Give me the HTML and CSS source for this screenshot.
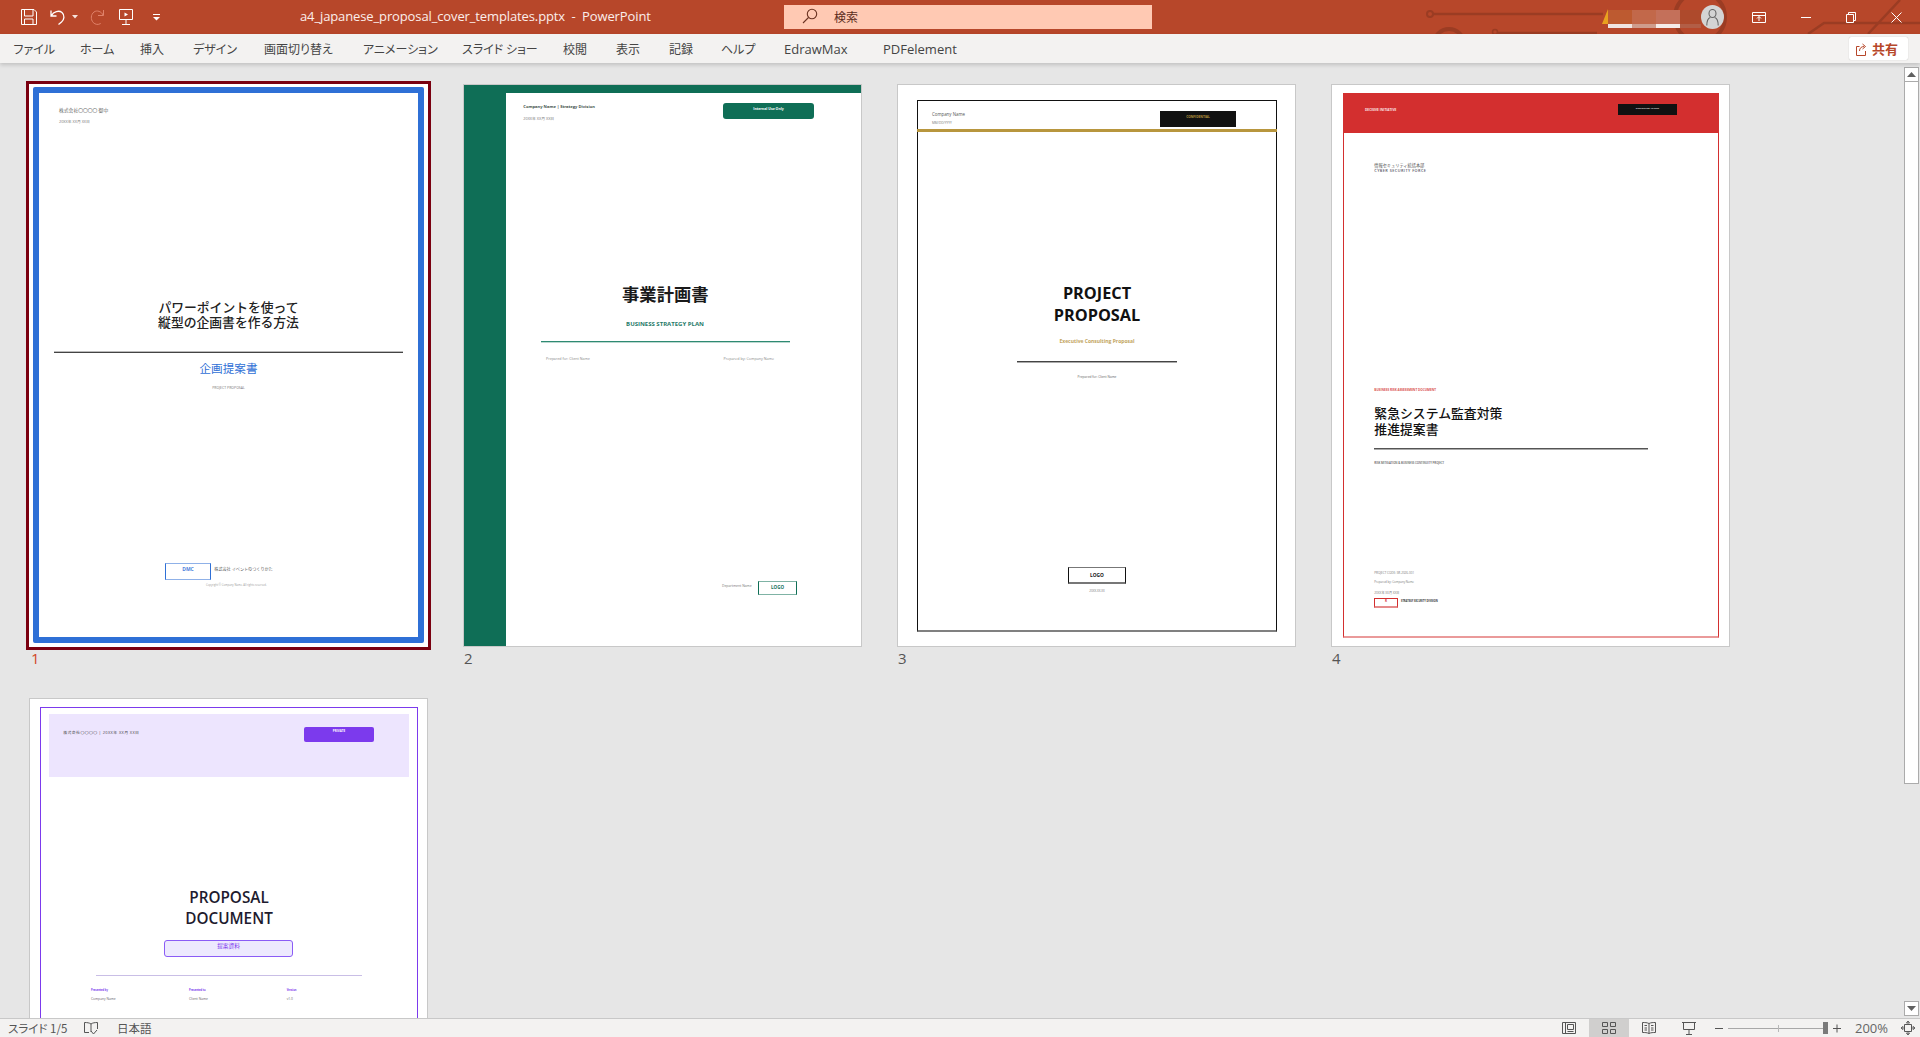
FILE: index.html
```html
<!DOCTYPE html>
<html lang="ja">
<head>
<meta charset="utf-8">
<title>a4_japanese_proposal_cover_templates.pptx - PowerPoint</title>
<link rel="stylesheet" href="styles.css">
</head>
<body>
<header class="titlebar">
  <svg class="circuit" width="500" height="34" viewBox="1420 0 500 34" fill="none">
    <path d="M1433 14H1603" stroke-width="2.500"/>
    <circle cx="1430" cy="14" r="3" stroke-width="2"/>
    <circle cx="1449" cy="44" r="15" stroke-width="4"/>
    <circle cx="1495" cy="32" r="2.500" stroke-width="1.500"/>
    <path d="M1498 33H1597" stroke-width="2.500"/>
    <circle cx="1700" cy="17" r="25" stroke-width="4"/>
    <path d="M1808 34L1824 23H1920M1868 34L1900 0" stroke-width="2.500"/>
  </svg>
  <div class="qat">
    <svg class="ico ico-save" width="16" height="16" viewBox="0 0 16 16" fill="none"><path d="M.5.500h12.500l2.500 2.500v12.500H.5zM3.500.5v6.500h8.500V.5M3.500 15.500V10h8.500v5.500"/></svg>
    <svg class="ico ico-undo" width="16" height="16" viewBox="0 0 16 16" fill="none"><path d="M1 1.500v5.500h5.500M1.500 6.500C3.500 2.500 9 1 12 3.500c3 2.700 2.300 7-.5 9.500L8.500 15.500" stroke-width="1.300"/></svg>
    <svg class="ico ico-caret" width="6" height="4" viewBox="0 0 6 4"><path d="M0 0h6L3 3.500z" fill="#f5e3dd" stroke="none"/></svg>
    <svg class="ico ico-redo" width="16" height="16" viewBox="0 0 16 16" fill="none"><path d="M13.500 1v5.500H8M13 6C11.500 2.500 7 .8 4 3c-3.300 2.500-3.500 7.500-.8 10.500 2 2.200 5 2.500 7.500 1"/></svg>
    <svg class="ico ico-present" width="14" height="16" viewBox="0 0 14 16" fill="none"><path d="M.5.500h13v10H.5zM7 10.500v5M3 15.500h8"/><path d="M5.500 3.500l3.500 2-3.500 2z" fill="#fff" stroke="none"/></svg>
    <svg class="ico ico-more" width="7" height="7" viewBox="0 0 7 7" fill="none"><path d="M0 .5h7"/><path d="M0 3h7L3.500 6.500z" fill="#fff" stroke="none"/></svg>
  </div>
  <div class="doc-title">a4_japanese_proposal_cover_templates.pptx &nbsp;-&nbsp; PowerPoint</div>
  <div class="search">
    <svg width="16" height="16" viewBox="0 0 16 16" fill="none" stroke="#6b3322" stroke-width="1.100"><circle cx="10" cy="6" r="4.700"/><path d="M6.500 9.500L1 15"/></svg>
    <span>検索</span>
  </div>
  <div class="account">
    <svg class="flame" width="6" height="15" viewBox="0 0 6 15"><path d="M6 0L0 15h6z" fill="#e9a11f"/></svg>
    <div class="mosaic">
      <i class="m1"></i><i class="m2"></i><i class="m3"></i><i class="m4"></i>
      <i class="m5"></i><i class="m6"></i><i class="m7"></i><i class="m8"></i>
    </div>
    <div class="avatar">
      <svg width="13" height="17" viewBox="0 0 13 17" fill="none" stroke="#666" stroke-width="1.100"><ellipse cx="6.500" cy="4.500" rx="3.500" ry="4"/><path d="M.8 16.500c0-5 2-7.500 3.500-8M12.200 16.500c0-5-2-7.500-3.500-8"/></svg>
    </div>
  </div>
  <div class="winctl">
    <svg width="14" height="11" viewBox="0 0 14 11" fill="none"><path d="M.5.500h13v10H.5zM.5 3.500h13"/><path d="M7 9V4.500M5 6.500l2-2 2 2"/></svg>
    <svg width="10" height="11" viewBox="0 0 10 11" fill="none"><path d="M0 5.500h10"/></svg>
    <svg width="10" height="11" viewBox="0 0 10 11" fill="none"><path d="M.5 2.500h7v8h-7zM2.500 2.500v-2h7v8h-2"/></svg>
    <svg width="11" height="11" viewBox="0 0 11 11" fill="none"><path d="M.5.500l10 10M10.500.500l-10 10"/></svg>
  </div>
</header>

<nav class="menubar">
  <span class="tab">ファイル</span><span class="tab">ホーム</span><span class="tab">挿入</span><span class="tab">デザイン</span><span class="tab">画面切り替え</span><span class="tab">アニメーション</span><span class="tab">スライド ショー</span><span class="tab">校閲</span><span class="tab">表示</span><span class="tab">記録</span><span class="tab">ヘルプ</span><span class="tab tab-latin">EdrawMax</span><span class="tab tab-latin">PDFelement</span>
  <button class="share">
    <svg width="11" height="14" viewBox="0 0 11 14" fill="none" stroke="#b7472a"><path d="M3.500 4.500H.5v9h9V9"/><path d="M3.500 9c0-3 2-4.500 4.500-4.500M6.500 2l3 2.500-3 2.500" /></svg>
    <span>共有</span>
  </button>
</nav>

<main class="workspace">
  <div class="sorter">
    <figure class="thumb">
      <section class="slide slide-selected">
        <div class="s1-frame"></div>
        <div class="t s1-co">株式会社〇〇〇〇 御中</div>
        <div class="t s1-date">20XX年 XX月 XX日</div>
        <h1 class="t s1-title">パワーポイントを使って<br>縦型の企画書を作る方法</h1>
        <div class="rule s1-rule"></div>
        <div class="t s1-sub">企画提案書</div>
        <div class="t s1-en">PROJECT PROPOSAL</div>
        <div class="s1-logo">DMC</div>
        <div class="t s1-corp">株式会社 イベントのつくりかた</div>
        <div class="t s1-copy">Copyright © Company Name. All rights reserved.</div>
      </section>
      <figcaption class="num num-selected">1</figcaption>
    </figure>

    <figure class="thumb">
      <section class="slide">
        <div class="s2-side"></div>
        <div class="s2-top"></div>
        <div class="t s2-co">Company Name | Strategy Division</div>
        <div class="t s2-date">20XX年 XX月 XX日</div>
        <div class="s2-pill">Internal Use Only</div>
        <h1 class="t s2-title">事業計画書</h1>
        <div class="t s2-sub">BUSINESS STRATEGY PLAN</div>
        <div class="rule s2-rule"></div>
        <div class="t s2-for">Prepared for: Client Name</div>
        <div class="t s2-by">Prepared by: Company Name</div>
        <div class="t s2-dept">Department Name</div>
        <div class="s2-logo">LOGO</div>
      </section>
      <figcaption class="num">2</figcaption>
    </figure>

    <figure class="thumb">
      <section class="slide">
        <div class="s3-frame"></div>
        <div class="s3-gold"></div>
        <div class="t s3-co">Company Name</div>
        <div class="t s3-date">MM/DD/YYYY</div>
        <div class="s3-conf">CONFIDENTIAL</div>
        <h1 class="t s3-title">PROJECT<br>PROPOSAL</h1>
        <div class="t s3-sub">Executive Consulting Proposal</div>
        <div class="rule s3-rule"></div>
        <div class="t s3-for">Prepared for: Client Name</div>
        <div class="s3-logo">LOGO</div>
        <div class="t s3-ver">20XX.XX.XX</div>
      </section>
      <figcaption class="num">3</figcaption>
    </figure>

    <figure class="thumb">
      <section class="slide">
        <div class="s4-frame"></div>
        <div class="s4-head"></div>
        <div class="t s4-tag">DECISIVE INITIATIVE</div>
        <div class="s4-black">RESTRICTED ACCESS</div>
        <div class="t s4-dept">情報セキュリティ統括本部</div>
        <div class="t s4-force">CYBER SECURITY FORCE</div>
        <div class="t s4-kicker">BUSINESS RISK ASSESSMENT DOCUMENT</div>
        <h1 class="t s4-title">緊急システム監査対策<br>推進提案書</h1>
        <div class="rule s4-rule"></div>
        <div class="t s4-risk">RISK MITIGATION &amp; BUSINESS CONTINUITY PROJECT</div>
        <div class="t s4-code">PROJECT CODE: SR-2026-001</div>
        <div class="t s4-by">Prepared by: Company Name</div>
        <div class="t s4-date">20XX年 XX月 XX日</div>
        <div class="s4-logo">R</div>
        <div class="t s4-div">STRATEGY SECURITY DIVISION</div>
      </section>
      <figcaption class="num">4</figcaption>
    </figure>

    <figure class="thumb">
      <section class="slide">
        <div class="s5-frame"></div>
        <div class="s5-head"></div>
        <div class="t s5-co">株式会社〇〇〇〇 | 20XX年 XX月 XX日</div>
        <div class="s5-pill">PRIVATE</div>
        <h1 class="t s5-title">PROPOSAL<br>DOCUMENT</h1>
        <div class="s5-tag">提案資料</div>
        <div class="rule s5-rule"></div>
        <div class="s5-meta">
          <div><b>Presented by</b><span>Company Name</span></div>
          <div><b>Presented to</b><span>Client Name</span></div>
          <div><b>Version</b><span>v1.0</span></div>
        </div>
      </section>
    </figure>
  </div>

  <aside class="scrollbar">
    <div class="sb-btn"><svg width="9" height="5" viewBox="0 0 9 5"><path d="M4.500 0L9 5H0z" fill="#606060"/></svg></div>
    <div class="sb-thumb"></div>
    <div class="sb-track"></div>
    <div class="sb-btn"><svg width="9" height="5" viewBox="0 0 9 5"><path d="M0 0h9L4.500 5z" fill="#606060"/></svg></div>
  </aside>
</main>

<footer class="statusbar">
  <span class="st-slide">スライド 1/5</span>
  <svg class="st-book" width="14" height="13" viewBox="0 0 14 13" fill="none" stroke="#555"><path d="M7 2C5.500 .8 3 .5.500.500v10H5M7 2c1.500-1.200 4-1.500 6.500-1.500V7M7 2v8"/><path d="M7 9l2.500 3L13 8"/></svg>
  <span class="st-lang">日本語</span>
  <div class="st-right">
    <span class="view"><svg width="14" height="12" viewBox="0 0 14 12" fill="none" stroke="#555"><path d="M.5.500h13v11H.5zM3.500.500v11M5.500 2.500h6v5h-6zM5.500 9.500h6"/></svg></span>
    <span class="view view-on"><svg width="14" height="12" viewBox="0 0 14 12" fill="none" stroke="#555"><path d="M.5.500h5v4h-5zM8.500.500h5v4h-5zM.5 7.500h5v4h-5zM8.500 7.500h5v4h-5z"/></svg></span>
    <span class="view"><svg width="14" height="12" viewBox="0 0 14 12" fill="none" stroke="#555"><path d="M7 1.500C5 .5 3 .5.500.500v10c2.500 0 4.500 0 6.500 1 2-1 4-1 6.500-1V.500C11 .5 9 .5 7 1.500zM7 1.500v10M2.500 3.500h2.500M2.500 6h2.500M2.500 8h2.500M9 3.500h2.500M9 6h2.500M9 8h2.500"/></svg></span>
    <span class="view"><svg width="14" height="13" viewBox="0 0 14 13" fill="none" stroke="#555"><path d="M0 .5h14M1.500.500v7h11v-7M7 7.500v5M4 12.500h6"/></svg></span>
    <div class="zoom">
      <svg width="8" height="9" viewBox="0 0 8 9" fill="none" stroke="#555"><path d="M0 4.500h8"/></svg>
      <div class="slider"><i class="tick"></i><i class="knob"></i></div>
      <svg class="zoom-plus" width="8" height="9" viewBox="0 0 8 9" fill="none" stroke="#555"><path d="M0 4.500h8M4 .5v8"/></svg>
    </div>
    <span class="pct">200%</span>
    <svg class="st-fit" width="16" height="16" viewBox="0 0 16 16" fill="none" stroke="#555"><path d="M4.500 4.500h7v7h-7zM8 3l-1.500 0L8 1l1.500 2zM8 13l-1.500 0L8 15l1.500-2zM3 8V6.500L1 8l2 1.500zM13 8V6.500L15 8l-2 1.500z"/></svg>
  </div>
</footer>
</body>
</html>
```
FILE: styles.css
```css
* { box-sizing: border-box; }
html, body { margin: 0; height: 100%; overflow: hidden; }
body {
  display: flex;
  flex-direction: column;
  height: 1037px;
  font-family: "Open Sans", "Noto Sans CJK JP", sans-serif;
  background: #e6e6e6;
  color: #444;
}

/* Title bar */
.titlebar {
  position: relative;
  flex: 0 0 34px;
  display: flex;
  align-items: center;
  background: #b7472a;
  color: #fff;
  overflow: hidden;
}
.circuit { position: absolute; right: 0; top: 0; stroke: #9b3c23; }
.qat { position: relative; display: flex; align-items: center; padding-left: 21px; width: 300px; flex: none; }
.ico { stroke: #fff; stroke-width: 1; flex: none; }
.ico-undo { margin-left: 13px; }
.ico-caret { margin-left: 6px; }
.ico-redo { margin-left: 12px; stroke: #e0826a; }
.ico-present { margin-left: 13px; }
.ico-more { margin-left: 20px; }
.doc-title {
  position: relative;
  width: 484px;
  flex: none;
  padding-bottom: 2px;
  font-size: 13px;
  letter-spacing: -0.12px;
  color: #fbeeea;
  white-space: nowrap;
}
.search {
  position: relative;
  flex: none;
  width: 368px;
  height: 24px;
  display: flex;
  align-items: center;
  gap: 16px;
  padding: 0 0 2px 18px;
  background: #ffc9b3;
  color: #5c2b1b;
  font-size: 12px;
  font-family: "Noto Sans CJK JP", sans-serif;
}
.account { position: relative; flex: none; margin-left: 450px; display: flex; align-items: center; }
.flame { margin-top: -2px; }
.mosaic { width: 93px; height: 18px; display: grid; grid-template-columns: 24px 24px 24px 21px; grid-template-rows: 14px 4px; margin-top: 4px; }
.m1 { background: #bd5a30; } .m2 { background: #c2684a; } .m3 { background: #c4705a; } .m4 { background: #ae4a2c; }
.m5 { background: #f0e4e0; } .m6 { background: #cf9c8c; } .m7 { background: #f5ecea; } .m8 { background: #b25e46; }
.avatar { width: 23px; height: 24px; border-radius: 50%; background: #d4d4d4; display: flex; align-items: center; justify-content: center; }
.winctl { position: relative; flex: none; margin-left: 28px; display: flex; align-items: center; gap: 35px; }
.winctl svg { stroke: #fff; stroke-width: 1; flex: none; }

/* Menu */
.menubar {
  position: relative;
  z-index: 2;
  flex: 0 0 29px;
  display: grid;
  grid-template-columns: 66.500px 60px 53px 71px 99px 99px 101px 53px 53px 52px 63px 99px auto;
  justify-content: start;
  align-items: center;
  padding-left: 13.500px;
  background: #f3f2f1;
  box-shadow: 0 2px 4px rgba(0, 0, 0, .16);
  font-family: "Noto Sans CJK JP", sans-serif;
  font-size: 12px;
  font-feature-settings: "palt";
  color: #444;
  white-space: nowrap;
}
.tab-latin { font-family: "Open Sans", sans-serif; font-size: 13px; }
.share {
  position: absolute;
  right: 12px;
  top: 3px;
  width: 59px;
  height: 23px;
  display: flex;
  align-items: center;
  gap: 5px;
  padding: 0 0 0 7px;
  border: 0;
  border-radius: 2px;
  background: #fff;
  box-shadow: 0 0 1px rgba(0, 0, 0, .3);
  color: #b7472a;
  font: 700 13px "Noto Sans CJK JP", sans-serif;
}

/* Workspace */
.workspace { flex: 1; min-height: 0; display: flex; overflow: hidden; background: #e6e6e6; }
.sorter {
  flex: 1;
  display: grid;
  grid-template-columns: repeat(4, 399px);
  grid-auto-rows: 614px;
  column-gap: 35px;
  align-content: start;
  padding: 21px 0 0 29px;
}
.thumb { margin: 0; }
.slide {
  position: relative;
  width: 399px;
  height: 563px;
  background: #fff;
  border: 1px solid #c8c8c8;
  overflow: hidden;
}
.slide-selected { border-color: #fff; outline: 3px solid #7a0010; }
.num { height: 51px; padding: 3px 0 0 1px; font-size: 15px; line-height: 16px; color: #555; }
.num-selected { color: #d24726; padding-left: 2px; }

.t { position: absolute; margin: 0; line-height: 1; white-space: nowrap; font-weight: 400; }
.rule { position: absolute; height: 1px; }

/* Slide 1 */
.s1-frame { position: absolute; left: 3px; top: 2px; width: 391px; height: 556px; border: 6px solid #2f70d6; border-radius: 2px; }
.s1-co { left: 29px; top: 22.500px; font-size: 4.800px; color: #666; }
.s1-date { left: 29px; top: 34.500px; font-size: 3.800px; color: #777; }
.s1-title { left: 0; width: 397px; top: 215px; text-align: center; font-size: 12.800px; line-height: 15.400px; font-weight: 500; color: #222; }
.s1-rule { left: 24px; top: 267px; width: 349px; background: #444; box-shadow: 0 -1px 0 #bbb; }
.s1-sub { left: 0; width: 397px; top: 276.700px; text-align: center; font-size: 11.600px; line-height: 14px; color: #2f70d6; }
.s1-en { left: 0; width: 397px; top: 301px; text-align: center; font-size: 3.500px; line-height: 4px; color: #777; }
.s1-logo {
  position: absolute; left: 135px; top: 478px; width: 46px; height: 17px;
  border: 1px solid #2f70d6; border-top-color: #8fb1e8; border-bottom-color: #8fb1e8;
  padding-top: 2px; text-align: center; font-size: 5px; line-height: 6px; font-weight: 700; color: #4f83dc;
}
.s1-corp { left: 184.300px; top: 482.500px; font-size: 4.100px; color: #555; }
.s1-copy { left: 176px; top: 498.600px; font-size: 2.700px; color: #999; }

/* Slide 2 */
.s2-side { position: absolute; left: -1px; top: -1px; width: 43px; height: 563px; background: #0f6e56; }
.s2-top { position: absolute; left: -1px; top: -1px; width: 399px; height: 9px; background: #0f6e56; }
.s2-co { left: 59.300px; top: 20.100px; font-size: 4.100px; font-weight: 700; color: #3f524c; }
.s2-date { left: 59.300px; top: 31.900px; font-size: 3.800px; color: #777; }
.s2-pill { position: absolute; left: 259px; top: 18px; width: 91px; height: 16px; border-radius: 3px; background: #0f6e56; padding-top: 4px; text-align: center; font-size: 3.500px; line-height: 4px; font-weight: 700; color: #fff; }
.s2-title { left: 101px; width: 200.600px; top: 199px; text-align: center; font-size: 17.300px; line-height: 22px; font-weight: 700; color: #1a1a1a; }
.s2-sub { left: 101px; width: 200px; top: 234.700px; text-align: center; font-size: 6px; line-height: 8px; font-weight: 700; color: #1f7a68; }
.s2-rule { left: 77px; top: 256px; width: 249px; background: #2e8a72; box-shadow: 0 1px 0 #bcd9d1; }
.s2-for { left: 82px; top: 271.900px; font-size: 3.600px; color: #888; }
.s2-by { left: 259.500px; top: 271.900px; font-size: 3.700px; color: #888; }
.s2-dept { left: 258px; top: 499px; font-size: 3.400px; color: #777; }
.s2-logo {
  position: absolute; left: 294px; top: 496px; width: 39px; height: 14px;
  border: 1px solid #0f6e56; border-top-color: #7fb3a5; border-bottom-color: #7fb3a5;
  text-align: center; font-size: 4.500px; line-height: 11px; font-weight: 700; color: #0f6e56;
}

/* Slide 3 */
.s3-frame { position: absolute; left: 19px; top: 15px; width: 360px; height: 532px; border: 1px solid #111; border-bottom: 2px solid #808080; }
.s3-gold { position: absolute; left: 19px; top: 44px; width: 360px; height: 3px; background: #b8963e; }
.s3-co { left: 34px; top: 27.200px; font-size: 4.400px; color: #555; }
.s3-date { left: 34px; top: 36.700px; font-size: 3.200px; color: #777; }
.s3-conf { position: absolute; left: 262px; top: 26px; width: 76px; height: 16px; background: #111; text-align: center; font-size: 3.200px; line-height: 13px; font-weight: 700; color: #b8963e; }
.s3-title { left: 99px; width: 200px; top: 198px; text-align: center; font-size: 16.300px; line-height: 21.700px; font-weight: 700; color: #111; }
.s3-sub { left: 99px; width: 200px; top: 252px; text-align: center; font-size: 5px; line-height: 8px; font-weight: 700; color: #c2a45e; }
.s3-rule { left: 119px; top: 276px; width: 160px; background: #444; box-shadow: 0 1px 0 #aaa; }
.s3-for { left: 99px; width: 200px; top: 291px; text-align: center; font-size: 3.200px; color: #666; }
.s3-logo {
  position: absolute; left: 170px; top: 482px; width: 58px; height: 17px;
  border: 1px solid #111; border-top-color: #777; border-bottom: 2px solid #777;
  text-align: center; font-size: 4.800px; line-height: 15px; font-weight: 700; color: #111;
}
.s3-ver { left: 99px; width: 200px; top: 504.500px; text-align: center; font-size: 3px; color: #777; }

/* Slide 4 */
.s4-frame { position: absolute; left: 11px; top: 8px; width: 376px; height: 545px; border: 1px solid #d32f2f; border-bottom: 2px solid #ea9a9a; }
.s4-head { position: absolute; left: 11px; top: 8px; width: 376px; height: 40px; background: #d32f2f; }
.s4-tag { left: 33px; top: 23.700px; font-size: 3.200px; font-weight: 700; color: #fbe4e4; }
.s4-black { position: absolute; left: 286px; top: 19px; width: 59px; height: 11px; background: #111; padding-top: 3px; text-align: center; font-size: 2.400px; line-height: 3px; font-weight: 700; color: #ddd; }
.s4-dept { left: 42.300px; top: 78.900px; font-size: 4.200px; color: #555; }
.s4-force { left: 42.300px; top: 84.400px; font-size: 3.800px; letter-spacing: .45px; font-weight: 600; color: #556; }
.s4-kicker { left: 42.300px; top: 303.800px; font-size: 3.100px; font-weight: 700; color: #d9534f; }
.s4-title { left: 42.300px; top: 321.300px; font-size: 12.850px; line-height: 15.400px; font-weight: 500; color: #111; }
.s4-rule { left: 42px; top: 363px; width: 274px; background: #555; box-shadow: 0 1px 0 #aaa; }
.s4-risk { left: 42.300px; top: 376.800px; font-size: 2.800px; font-weight: 600; color: #555; }
.s4-code { left: 42.300px; top: 487px; font-size: 3px; color: #777; }
.s4-by { left: 42.300px; top: 495.600px; font-size: 2.900px; color: #777; }
.s4-date { left: 42.300px; top: 506.800px; font-size: 3.100px; color: #777; }
.s4-logo {
  position: absolute; left: 42px; top: 513px; width: 24px; height: 10px;
  border: 1px solid #d32f2f; border-bottom: 2px solid #e58b8b;
  text-align: center; font-size: 3px; line-height: 4px; font-weight: 700; color: #d32f2f;
}
.s4-div { left: 69px; top: 514.700px; font-size: 2.500px; font-weight: 700; color: #333; }

/* Slide 5 */
.s5-frame { position: absolute; left: 10px; top: 8px; width: 378px; height: 545px; border: 1px solid #7c3aed; }
.s5-head { position: absolute; left: 19px; top: 15px; width: 360px; height: 63px; background: #ede5fe; }
.s5-co { left: 33.300px; top: 32.300px; font-size: 3.900px; letter-spacing: .38px; color: #444; }
.s5-pill { position: absolute; left: 274px; top: 28px; width: 70px; height: 15px; border-radius: 2px; background: #7c3aed; padding-top: 3px; text-align: center; font-size: 3px; line-height: 3px; font-weight: 700; color: #fff; }
.s5-title { left: 99px; width: 200px; top: 188.400px; text-align: center; font-size: 15.300px; line-height: 20.600px; font-weight: 600; color: #1e1b2e; }
.s5-tag { position: absolute; left: 134px; top: 241px; width: 129px; height: 17px; background: #ede9fe; border: 1px solid #8b5cf6; border-radius: 3px; text-align: center; font-size: 5.700px; line-height: 10px; color: #7c3aed; }
.s5-rule { left: 66px; top: 276px; width: 266px; background: #c9bee6; }
.s5-meta { position: absolute; left: 61px; top: 290px; display: grid; grid-template-columns: 98px 97.700px auto; }
.s5-meta b { display: block; font-size: 2.600px; line-height: 3px; color: #7c3aed; }
.s5-meta span { display: block; margin-top: 5px; font-size: 3.300px; line-height: 4px; color: #666; }

/* Scrollbar */
.scrollbar { flex: 0 0 16px; display: flex; flex-direction: column; padding: 4px 1px 2px 0; }
.sb-btn { height: 15px; flex: none; display: flex; align-items: center; justify-content: center; background: #fff; border: 1px solid #ababab; }
.sb-thumb { height: 702px; flex: none; background: #fff; border: 1px solid #ababab; border-top: 0; }
.sb-track { flex: 1; }

/* Status bar */
.statusbar {
  position: relative;
  z-index: 2;
  flex: 0 0 19px;
  display: flex;
  align-items: center;
  background: #f3f2f1;
  border-top: 1px solid #c8c8c8;
  font-family: "Noto Sans CJK JP", sans-serif;
  font-size: 11.500px;
  line-height: 14px;
  color: #555;
  white-space: nowrap;
}
.st-slide { margin-left: 8px; width: 76px; font-feature-settings: "palt"; }
.st-book { flex: none; }
.st-lang { margin-left: 19px; }
.st-right { margin-left: auto; display: flex; align-items: center; height: 100%; }
.view { width: 40px; height: 100%; display: flex; align-items: center; justify-content: center; }
.view-on { background: #d0cfce; }
.zoom { display: flex; align-items: center; gap: 5px; margin-left: 6px; }
.zoom-plus { margin-left: 4px; }
.slider { position: relative; width: 96px; height: 1px; background: #a8a8a8; }
.tick { position: absolute; left: 50px; top: -3px; width: 1px; height: 7px; background: #b8b8b8; }
.knob { position: absolute; right: -4px; top: -6px; width: 5px; height: 12px; background: #7a7a7a; }
.pct { margin-left: 14px; width: 45px; font: 13px/14px "Open Sans", sans-serif; color: #666; }
.st-fit { margin-right: 4px; }
```
